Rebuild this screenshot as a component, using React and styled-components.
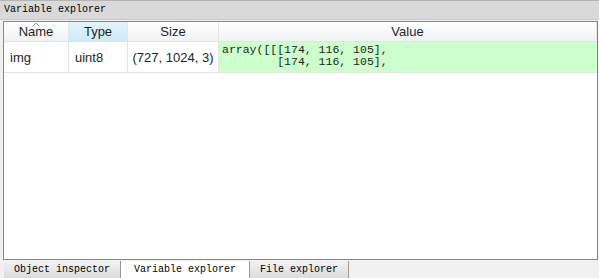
import React from "react";
import styled, { createGlobalStyle } from "styled-components";

const Global = createGlobalStyle`
  html, body { margin: 0; padding: 0; background: #f0f0f0; }
  #root { width: 599px; height: 278px; }
`;

const Pane = styled.div`
  width: 599px;
  height: 278px;
  display: flex;
  flex-direction: column;
  background: #f0f0f0;
  overflow: hidden;
`;

const TitleBar = styled.div`
  height: 18px;
  border-top: 1px solid #b4b4b4;
  border-bottom: 1px solid #c8c8c8;
  background: #d9d9d9;
  font-family: "Liberation Mono", monospace;
  font-size: 10px;
  line-height: 18px;
  padding-left: 4px;
  color: #000;
`;

const Frame = styled.div`
  margin: 1px 1px 0 3px;
  height: 237px;
  background: #fff;
  border: 1px solid #828790;
  display: flex;
  flex-direction: column;
`;

const HeaderRow = styled.div`
  display: flex;
  height: 19px;
  border-bottom: 1px solid #e3e3e3;
`;

const HeadCell = styled.div`
  position: relative;
  width: ${(p) => (p.$w ? `${p.$w}px` : "auto")};
  flex: ${(p) => (p.$w ? "none" : "1")};
  border-right: 1px solid #e3e5e8;
  background: ${(p) =>
    p.$hot
      ? "linear-gradient(#e3f4fc, #cdebf8)"
      : "linear-gradient(#ffffff, #f1f2f4)"};
  font-family: "Liberation Sans", Arial, sans-serif;
  font-size: 13px;
  line-height: 19px;
  text-align: center;
  color: #1e1e1e;
  box-sizing: border-box;
`;

const SortArrow = styled.svg`
  position: absolute;
  top: 0;
  left: 50%;
  margin-left: -4px;
`;

const DataRow = styled.div`
  display: flex;
  height: 30px;
  border-bottom: 1px solid #e3e3e3;
`;

const Cell = styled.div`
  width: ${(p) => (p.$w ? `${p.$w}px` : "auto")};
  flex: ${(p) => (p.$w ? "none" : "1")};
  display: flex;
  align-items: center;
  justify-content: ${(p) => (p.$center ? "center" : "flex-start")};
  padding-left: ${(p) => (p.$center ? 0 : 6)}px;
  border-right: 1px solid #e3e3e3;
  font-family: "Liberation Sans", Arial, sans-serif;
  font-size: 13px;
  color: #1e1e1e;
  box-sizing: border-box;
`;

const ValueCell = styled.div`
  flex: 1;
  background: #ccffcc;
  padding: 2px 0 0 3px;
  font-family: "Liberation Mono", monospace;
  font-size: 11.5px;
  line-height: 12px;
  white-space: pre;
  color: #1e1e1e;
`;

const TabBar = styled.div`
  display: flex;
  padding-left: 4px;
  margin-top: 1px;
  height: 17px;
`;

const Tab = styled.div`
  width: ${(p) => p.$w}px;
  box-sizing: border-box;
  border-right: 1px solid #9a9a9a;
  background: ${(p) =>
    p.$active ? "#ffffff" : "linear-gradient(#f2f2f2, #dcdcdc)"};
  font-family: "Liberation Mono", monospace;
  font-size: 10px;
  line-height: 17px;
  text-align: center;
  color: #000;
`;

const columns = [
  { name: "Name", w: 65, sort: true },
  { name: "Type", w: 59, hot: true },
  { name: "Size", w: 91 },
];

export default function App() {
  return (
    <Pane>
      <Global />
      <TitleBar>Variable explorer</TitleBar>
      <Frame>
        <HeaderRow>
          {columns.map((c) => (
            <HeadCell key={c.name} $w={c.w} $hot={c.hot}>
              {c.sort && (
                <SortArrow width="8" height="5" viewBox="0 0 8 5">
                  <path d="M0.5 4.5 L4 1 L7.5 4.5" fill="none" stroke="#9aa3ad" strokeWidth="1" />
                </SortArrow>
              )}
              {c.name}
            </HeadCell>
          ))}
          <HeadCell>Value</HeadCell>
        </HeaderRow>
        <DataRow>
          <Cell $w={65}>img</Cell>
          <Cell $w={59}>uint8</Cell>
          <Cell $w={91} $center>(727, 1024, 3)</Cell>
          <ValueCell>{"array([[[174, 116, 105],\n        [174, 116, 105],"}</ValueCell>
        </DataRow>
      </Frame>
      <TabBar>
        <Tab $w={117}>Object inspector</Tab>
        <Tab $w={129} $active>Variable explorer</Tab>
        <Tab $w={99}>File explorer</Tab>
      </TabBar>
    </Pane>
  );
}
